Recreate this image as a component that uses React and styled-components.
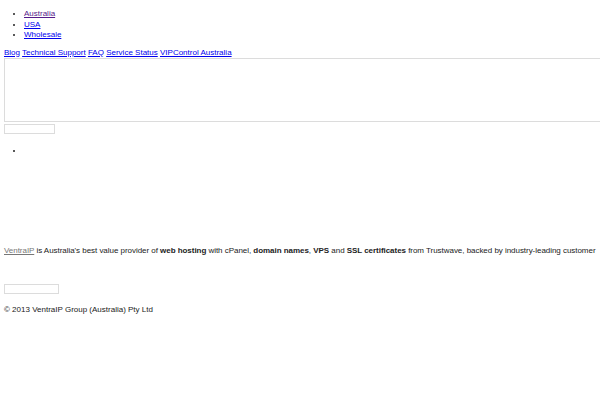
import styled, { createGlobalStyle } from "styled-components"

const Global = createGlobalStyle`
  html, body {
    margin: 0;
    padding: 0;
    background: #fff;
  }
  body {
    font-family: "Liberation Sans", Arial, sans-serif;
    font-size: 8px;
    line-height: 10.5px;
    color: #222;
    overflow: hidden;
  }
`;

const Page = styled.div`
  padding: 0 0 0 4px;
  width: 596px;
  height: 400px;
  overflow: hidden;
`;

const SiteList = styled.ul`
  margin: 9px 0 7px 0;
  padding-left: 20px;
  list-style: disc;
`;

const Link = styled.a`
  color: ${props => (props.visited ? "#551a8b" : "#0000ee")};
  text-decoration: underline;
`;

const Nav = styled.div`
  white-space: nowrap;
`;

const Banner = styled.div`
  width: 700px;
  height: 62px;
  border: 1px solid #dcdcdc;
  box-sizing: content-box;
`;

const Field = styled.div`
  width: ${props => props.w}px;
  height: 8px;
  border: 1px solid #dcdcdc;
  margin-top: ${props => props.top || 0}px;
`;

const Slides = styled.ul`
  margin: 12px 0 0 0;
  padding-left: 20px;
  height: 100px;
  list-style: disc;
`;

const Slide = styled.li`
  height: 10.5px;
`;

const About = styled.p`
  margin: 0;
  white-space: nowrap;
  letter-spacing: -0.04px;
  color: #222;
`;

const Brand = styled.a`
  color: #777;
  text-decoration: underline;
`;

const Copy = styled.div`
  margin-top: 11px;
  color: #222;
`;

export default function App() {
  return (
    <Page>
      <Global />
      <SiteList>
        <li><Link href="#" visited>Australia</Link></li>
        <li><Link href="#">USA</Link></li>
        <li><Link href="#">Wholesale</Link></li>
      </SiteList>
      <Nav>
        <Link href="#">Blog</Link> <Link href="#">Technical Support</Link>{" "}
        <Link href="#">FAQ</Link> <Link href="#">Service Status</Link>{" "}
        <Link href="#">VIPControl Australia</Link>
      </Nav>
      <Banner />
      <Field w={49} top={2} />
      <Slides>
        <Slide />
      </Slides>
      <About>
        <Brand href="#">VentraIP</Brand> is Australia's best value provider of <b>web hosting</b> with cPanel,{" "}
        <b>domain names</b>, <b>VPS</b> and <b>SSL certificates</b> from Trustwave, backed by industry-leading customer
      </About>
      <Field w={53} top={27} />
      <Copy>© 2013 VentraIP Group (Australia) Pty Ltd</Copy>
    </Page>
  )
}
